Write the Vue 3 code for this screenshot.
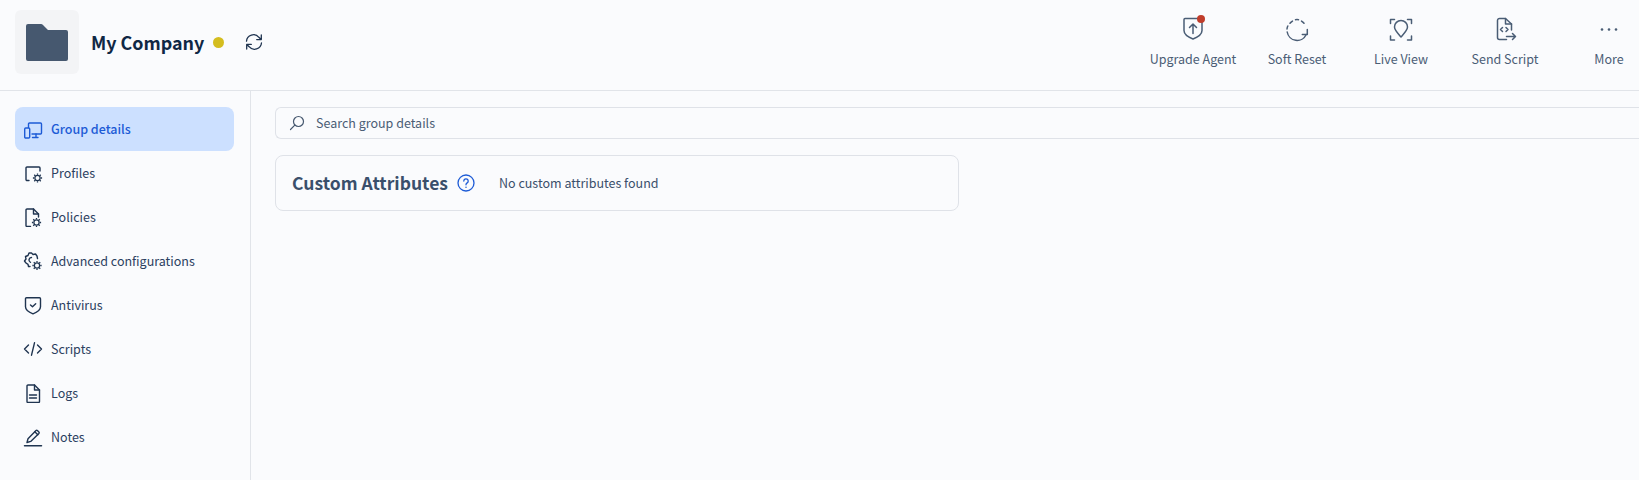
<template>
  <div class="page">
    <header class="top">
      <div class="logo">
        <svg width="42" height="37" viewBox="0 0 42 37"><path d="M2 0h13a3 3 0 0 1 2 1l5 5h18a2 2 0 0 1 2 2v27a2 2 0 0 1-2 2H2a2 2 0 0 1-2-2V2a2 2 0 0 1 2-2z" fill="#46586f"/></svg>
      </div>
      <h1 class="name">My Company</h1>
      <span class="dot"></span>
      <svg class="refresh" width="20" height="20" viewBox="0 0 20 20" fill="none" stroke="#1f3450" stroke-width="1.3" stroke-linecap="round" stroke-linejoin="round">
        <path d="M2.5 9.2a7 7 0 0 1 12.4-3.9l2.2 2.2M17.3 3v4.6h-4.6" />
        <path d="M17.5 10.8a7 7 0 0 1-12.4 3.9l-2.2-2.2M2.7 17v-4.6h4.6" />
      </svg>
      <nav class="actions">
        <button v-for="a in actions" :key="a.label" class="action">
          <span class="action-icon">
            <svg width="26" height="26" viewBox="0 0 26 26" fill="none" stroke="#4a5d75" stroke-width="1.5" stroke-linecap="round" stroke-linejoin="round" v-html="a.icon"></svg>
            <span v-if="a.badge" class="badge"></span>
          </span>
          <span>{{ a.label }}</span>
        </button>
      </nav>
    </header>

    <div class="body">
      <aside class="side">
        <a v-for="item in menu" :key="item.label" class="item" :class="{ active: item.active }">
          <svg width="20" height="20" viewBox="0 0 20 20" fill="none" stroke="currentColor" stroke-width="1.4" stroke-linecap="round" stroke-linejoin="round" v-html="item.icon"></svg>
          <span class="label">{{ item.label }}</span>
        </a>
      </aside>

      <main class="main">
        <div class="search">
          <svg width="16" height="16" viewBox="0 0 16 16" fill="none" stroke="#46586f" stroke-width="1.2" stroke-linecap="round"><circle cx="9.5" cy="6.5" r="5" /><path d="M5.8 10.2 1.5 14.5" /></svg>
          <span class="label">Search group details</span>
        </div>
        <section class="card">
          <h2 class="label">Custom Attributes</h2>
          <svg class="help" width="18" height="18" viewBox="0 0 18 18" fill="none" stroke="#1d5bd6" stroke-width="1.3" stroke-linecap="round"><circle cx="9" cy="9" r="8" /><path d="M6.8 7a2.2 2.2 0 1 1 3.4 1.9c-.8.5-1.2 1-1.2 1.9" /><path d="M9 13.2v.1" stroke-width="1.5" /></svg>
          <p class="label">No custom attributes found</p>
        </section>
      </main>
    </div>
  </div>
</template>

<script setup>
// small gear: hub ring, body ring and teeth as short spokes
const gear = (x, y) => {
  let teeth = ''
  for (let i = 0; i < 8; i++) {
    const a = (i * Math.PI) / 4
    const x1 = (x + Math.cos(a) * 3.2).toFixed(2)
    const y1 = (y + Math.sin(a) * 3.2).toFixed(2)
    const x2 = (x + Math.cos(a) * 4.6).toFixed(2)
    const y2 = (y + Math.sin(a) * 4.6).toFixed(2)
    teeth += `M${x1} ${y1}L${x2} ${y2}`
  }
  return `<path d="${teeth}" stroke-width="1.3" stroke-linecap="butt"/><circle cx="${x}" cy="${y}" r="2.6" stroke-width="1.2"/>`
}

const actions = [
  {
    label: 'Upgrade Agent',
    badge: true,
    icon: '<path d="M5 2.500h16a1 1 0 0 1 1 1v11c0 3.500-4 6.500-9 8.500-5-2-9-5-9-8.500v-11a1 1 0 0 1 1-1z"/><path d="M13 17.500v-9M9.500 11.500 13 8l3.500 3.500"/>',
  },
  {
    label: 'Soft Reset',
    icon: '<path d="M3.200 16a10 10 0 0 0 19 2.500" /><path d="M23.300 13.500v5h-5"/><path d="M3 13a10 10 0 0 1 .8-3M6 7.300a10 10 0 0 1 2.500-2.200M11.500 3.700a10 10 0 0 1 3 0M17.500 5.100a10 10 0 0 1 2.500 2.200"/>',
  },
  {
    label: 'Live View',
    icon: '<path d="M2.500 7.500V3.500h4M19.500 3.500h4v4M2.500 20v4h4M19.500 24h4v-4"/><path d="M13 21c-3.500-4-6.500-7-6.500-10a6.500 6.500 0 0 1 13 0c0 3-3 6-6.500 10z"/>',
  },
  {
    label: 'Send Script',
    icon: '<path d="M19.500 14V8l-6-5.500H7.500a2 2 0 0 0-2 2v17a2 2 0 0 0 2 2h7"/><path d="M13.500 2.500V8h6"/><path d="m10.500 11.500-2 2 2 2M14 11.500l2 2-2 2"/><path d="M14.500 20.500h8.500M20.500 17.500l3 3-3 3"/>',
  },
  {
    label: 'More',
    icon: '<circle cx="6" cy="13.500" r="1.300" fill="#4a5d75" stroke="none"/><circle cx="13" cy="13.500" r="1.300" fill="#4a5d75" stroke="none"/><circle cx="20" cy="13.500" r="1.300" fill="#4a5d75" stroke="none"/>',
  },
]

const menu = [
  {
    label: 'Group details',
    active: true,
    icon: '<path d="M5.500 8.500V5a1 1 0 0 1 1-1h11a1 1 0 0 1 1 1v9a1 1 0 0 1-1 1H9"/><path d="M13 15v3M9.500 18.500H15"/><rect x="1.700" y="9" width="5" height="10" rx="1"/>',
  },
  {
    label: 'Profiles',
    icon: '<path d="M6 17.500H4a1 1 0 0 1-1-1v-11.500a1 1 0 0 1 1-1h12a1 1 0 0 1 1 1v3"/>' + gear(14.500, 15),
  },
  {
    label: 'Policies',
    icon: '<path d="M7.500 19.500H4a1 1 0 0 1-1-1v-15.500a1 1 0 0 1 1-1h6.500l5 5v3"/><path d="M10.500 2v5h5"/>' + gear(13.500, 15.500),
  },
  {
    label: 'Advanced configurations',
    icon: '<path d="M7 15.500H5.500l-.5-2.200-2-1.300L1.500 10 3 8l-.5-2.500L5 4.500l1-2.500h2.500L10 3.500l2.500-.5 1.500 2 .5 2.500"/><path d="M8.500 6.500a2.500 2.500 0 0 0-1 4.800"/>' + gear(14, 14.500),
  },
  {
    label: 'Antivirus',
    icon: '<path d="M3.500 2.800h13a1 1 0 0 1 1 1v8c0 3-3.500 5.500-7.500 7-4-1.500-7.500-4-7.500-7v-8a1 1 0 0 1 1-1z"/><path d="m7.500 10 2 1.800 3.200-3"/>',
  },
  {
    label: 'Scripts',
    icon: '<path d="M5.500 6 1.500 10l4 4M14.500 6l4 4-4 4M11.500 3.800 8.500 16.200"/>',
  },
  {
    label: 'Logs',
    icon: '<path d="M11.500 2H5a1 1 0 0 0-1 1v15.500a1 1 0 0 0 1 1h10.500a1 1 0 0 0 1-1V7z"/><path d="M11.500 2v5h5M6.500 12h7M6.500 15h7"/>',
  },
  {
    label: 'Notes',
    icon: '<path d="M1.500 18.700h17" stroke-width="1.500"/><path d="m4 15.500 1-3.800 8-8.200a1 1 0 0 1 1.400 0l1.500 1.500a1 1 0 0 1 0 1.400l-8.200 8z"/><path d="m11.800 4.800 3 3"/>',
  },
]
</script>

<style>
html,
body {
  margin: 0;
  overflow: hidden;
  background: #fafbfd;
}
</style>

<style scoped>
.page {
  width: 1661px;
  height: 480px;
  display: flex;
  flex-direction: column;
  background: #fafbfd;
  color: #1f3450;
  font-family: "Noto Sans CJK SC", "Noto Sans", sans-serif;
  font-size: 12.5px;
}

.top {
  display: flex;
  align-items: center;
  height: 91px;
  flex: none;
  box-sizing: border-box;
  border-bottom: 1px solid #e1e4e9;
  padding: 0 0 6px 15px;
}

.logo {
  display: flex;
  align-items: center;
  justify-content: center;
  width: 64px;
  height: 64px;
  border-radius: 6px;
  background: #f3f4f6;
}

.name {
  margin: 0 0 0 12px;
  font-size: 17.9px;
  font-weight: 700;
  color: #0f2744;
}

.dot {
  width: 11px;
  height: 11px;
  border-radius: 50%;
  background: #d4bd1f;
  margin-left: 9px;
}

.refresh {
  margin-left: 20px;
}

.actions {
  display: flex;
  align-self: flex-start;
  margin-left: auto;
  padding-top: 16px;
}

.action {
  width: 104px;
  display: flex;
  flex-direction: column;
  align-items: center;
  gap: 7px;
  padding: 0;
  border: 0;
  background: none;
  font: inherit;
  color: #4a5d75;
}

.action-icon {
  position: relative;
  display: block;
  height: 26px;
}

.action-icon svg {
  display: block;
}

.badge {
  position: absolute;
  top: -1px;
  right: 1px;
  width: 8px;
  height: 8px;
  border-radius: 50%;
  background: #c03d2b;
}

.body {
  display: flex;
  flex: 1;
}

.side {
  width: 251px;
  flex: none;
  box-sizing: border-box;
  border-right: 1px solid #e1e4e9;
  padding: 16px 16px 0 15px;
}

.item {
  display: flex;
  align-items: center;
  gap: 8px;
  height: 44px;
  padding-left: 8px;
  border-radius: 8px;
  color: #2b4060;
}

.item svg {
  flex: none;
  color: #1f3450;
}

.item.active {
  background: #cce0ff;
  color: #1d5bd6;
  font-weight: 500;
}

.item.active svg {
  color: #1d5bd6;
}

/* the font sits a little low in its line box */
.label {
  padding-bottom: 2px;
}

.main {
  flex: 1;
  padding: 16px 0 0 24px;
}

.search {
  display: flex;
  align-items: center;
  gap: 11px;
  height: 32px;
  box-sizing: border-box;
  padding-left: 13px;
  border: 1px solid #dfe2e8;
  border-right: 0;
  border-radius: 6px 0 0 6px;
  color: #4a5d75;
}

.card {
  display: flex;
  align-items: center;
  width: 684px;
  height: 56px;
  box-sizing: border-box;
  margin-top: 16px;
  padding-left: 16px;
  border: 1px solid #dfe2e8;
  border-radius: 8px;
}

.card h2 {
  margin: 0;
  font-size: 17.5px;
  font-weight: 600;
  color: #3a4f6b;
}

.help {
  margin-left: 9px;
}

.card p {
  margin: 0 0 0 24px;
  font-size: 12.5px;
  color: #3a4f6b;
}
</style>
